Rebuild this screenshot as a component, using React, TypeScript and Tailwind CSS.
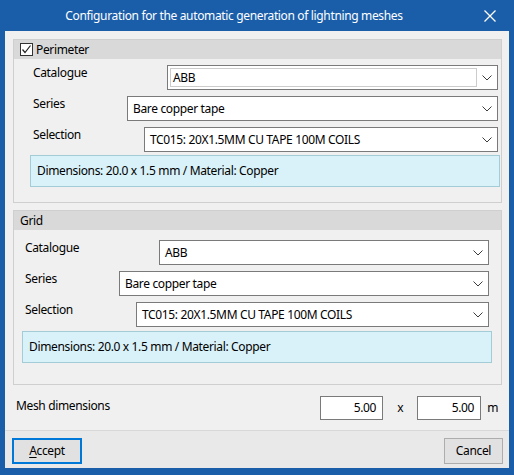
import type { ReactNode } from "react";

const font = { fontFamily: '"Noto Sans", "Open Sans", sans-serif' };

function Chevron() {
  return (
    <svg width="10" height="6" viewBox="0 0 10 6" className="shrink-0">
      <path d="M0.5 0.5 L5 5 L9.5 0.5" fill="none" stroke="#3c3c3c" strokeWidth="1" />
    </svg>
  );
}

type ComboProps = {
  value: string;
  width: string;
  editable?: boolean;
};

function Combo({ value, width, editable }: ComboProps) {
  return (
    <div className={`flex h-[25px] items-center border border-[#7a7a7a] bg-white ${width}`}>
      {editable ? (
        <div className="ml-[2px] flex h-[19px] flex-1 items-center border border-[#cccccc] pl-[2px]">{value}</div>
      ) : (
        <div className="flex-1 pl-[5px]">{value}</div>
      )}
      <div className="flex w-[20px] justify-center">
        <Chevron />
      </div>
    </div>
  );
}

function Row({ label, labelWidth, children }: { label: string; labelWidth: string; children: ReactNode }) {
  return (
    <div className="flex h-[25px]">
      <div className={`leading-[16px] ${labelWidth}`}>{label}</div>
      {children}
    </div>
  );
}

function InfoBox() {
  return (
    <div className="flex h-[32px] w-[470px] items-center border border-[#a4ccd6] bg-[#d9f2f9] pl-[6px]">
      Dimensions: 20.0 x 1.5 mm / Material: Copper
    </div>
  );
}

export default function App() {
  return (
    <div
      className="flex h-[475px] w-[514px] flex-col bg-[#1a5eaa] text-[12px] tracking-[-0.35px] text-black"
      style={font}
    >
      {/* Title bar */}
      <div className="flex h-[31px] items-center text-white">
        <div className="flex-1 text-center leading-[16px]">
          Configuration for the automatic generation of lightning meshes
        </div>
        <div className="flex w-[46px] justify-center pr-[2px]">
          <svg width="12" height="12" viewBox="0 0 12 12">
            <path d="M0.5 0.5 L11.5 11.5 M11.5 0.5 L0.5 11.5" stroke="white" strokeWidth="1.3" />
          </svg>
        </div>
      </div>

      {/* Client area */}
      <div className="mx-[5px] mb-[7px] flex flex-1 flex-col bg-[#f0f0f0]">
        {/* Perimeter group */}
        <div className="ml-[8px] mt-[8px] w-[489px] border border-[#cfcfcf]">
          <div className="flex h-[19px] items-center bg-[#d9d9d9] pl-[6px]">
            <div className="flex h-[13px] w-[13px] items-center justify-center border border-[#333333] bg-white">
              <svg width="11" height="11" viewBox="0 0 11 11">
                <path d="M1.5 5.5 L4 8.5 L9.5 1.5" fill="none" stroke="#222222" strokeWidth="1.2" />
              </svg>
            </div>
            <span className="ml-[3px]">Perimeter</span>
          </div>
          <div className="flex flex-col gap-[6px] pl-[19px] pt-[6px]">
            <Row label="Catalogue" labelWidth="w-[134px]">
              <Combo value="ABB" width="w-[331px]" editable />
            </Row>
            <Row label="Series" labelWidth="w-[94px]">
              <Combo value="Bare copper tape" width="w-[371px]" />
            </Row>
            <Row label="Selection" labelWidth="w-[111px]">
              <Combo value="TC015: 20X1.5MM CU TAPE 100M COILS" width="w-[354px]" />
            </Row>
          </div>
          <div className="ml-[16px] mt-[3px] mb-[15px]">
            <InfoBox />
          </div>
        </div>

        {/* Grid group */}
        <div className="ml-[8px] mt-[7px] w-[489px] border border-[#cfcfcf]">
          <div className="flex h-[19px] items-center bg-[#d9d9d9] pl-[6px]">Grid</div>
          <div className="flex flex-col gap-[6px] pl-[11px] pt-[10px]">
            <Row label="Catalogue" labelWidth="w-[134px]">
              <Combo value="ABB" width="w-[330px]" />
            </Row>
            <Row label="Series" labelWidth="w-[94px]">
              <Combo value="Bare copper tape" width="w-[370px]" />
            </Row>
            <Row label="Selection" labelWidth="w-[111px]">
              <Combo value="TC015: 20X1.5MM CU TAPE 100M COILS" width="w-[353px]" />
            </Row>
          </div>
          <div className="ml-[8px] mt-[4px] mb-[21px]">
            <InfoBox />
          </div>
        </div>

        {/* Mesh dimensions */}
        <div className="mt-[11px] flex h-[24px] items-center pl-[11px] pr-[11px]">
          <div className="-mt-[4px]">Mesh dimensions</div>
          <div className="ml-auto flex items-center">
            <div className="flex h-[24px] w-[63px] items-center justify-end border border-[#7a7a7a] bg-white pr-[6px]">5.00</div>
            <span className="w-[34px] text-center">x</span>
            <div className="flex h-[24px] w-[64px] items-center justify-end border border-[#7a7a7a] bg-white pr-[6px]">5.00</div>
            <span className="ml-[6px]">m</span>
          </div>
        </div>

        {/* Footer */}
        <div className="mt-auto flex h-[38px] items-start justify-between border-t border-[#d8d8d8] bg-[#e9e9e9] pl-[7px] pr-[6px] pt-[7px]">
          <button className="flex h-[26px] w-[70px] items-center justify-center border-2 border-[#0078d7] bg-[#e1e1e1]">
            <span>
              <span className="underline underline-offset-2">A</span>ccept
            </span>
          </button>
          <button className="flex h-[26px] w-[59px] items-center justify-center border border-[#adadad] bg-[#e1e1e1]">
            Cancel
          </button>
        </div>
      </div>
    </div>
  );
}
